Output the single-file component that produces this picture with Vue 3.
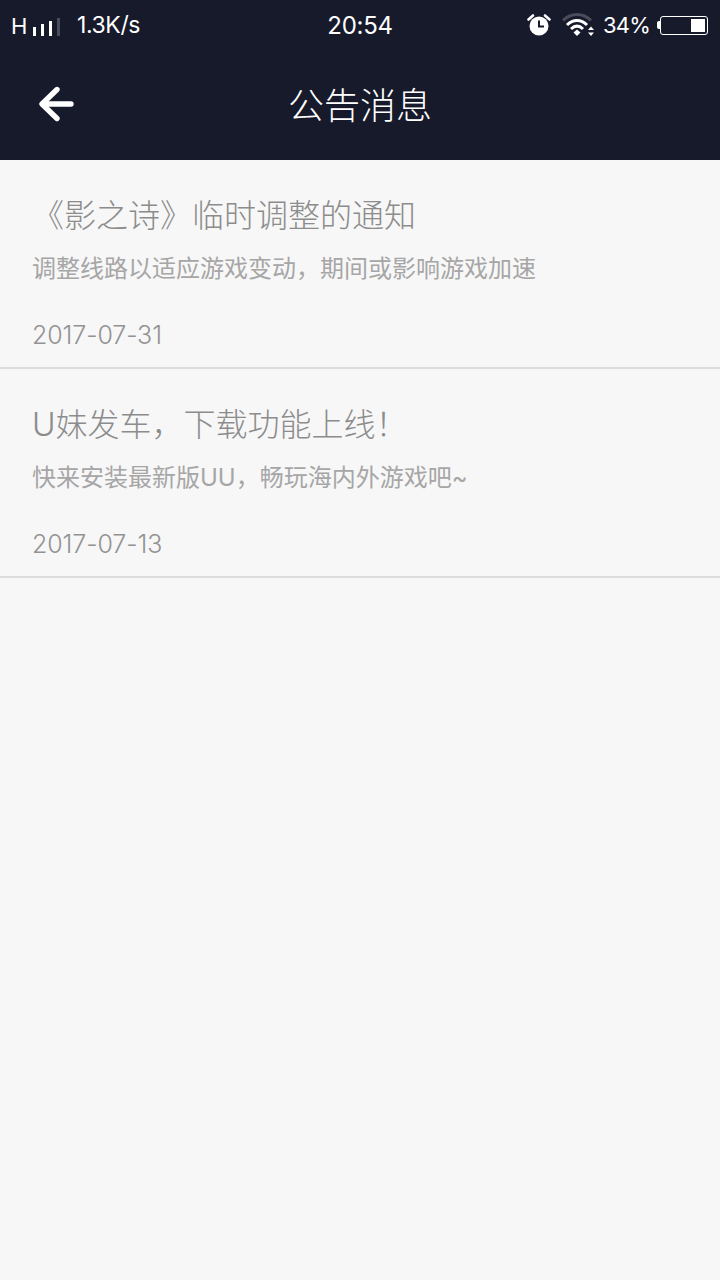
<script setup>
const notices = [
  {
    title: "《影之诗》临时调整的通知",
    desc: "调整线路以适应游戏变动，期间或影响游戏加速",
    date: "2017-07-31",
  },
  {
    title: "U妹发车，下载功能上线！",
    desc: "快来安装最新版UU，畅玩海内外游戏吧~",
    date: "2017-07-13",
  },
];
</script>

<template>
  <div class="page">
    <div class="statusbar">
      <div class="status-left">
        <span class="net">H</span>
        <div class="signal">
          <i class="b1"></i><i class="b2"></i><i class="b3"></i><i class="b4"></i>
        </div>
        <span class="speed">1.3K/s</span>
      </div>
      <div class="clock">20:54</div>
      <div class="status-right">
        <svg class="alarm" width="24" height="24" viewBox="0 0 24 24">
          <circle cx="12" cy="13" r="9.5" fill="#fff" />
          <path d="M12 7.5V13.5H17" fill="none" stroke="#171a2b" stroke-width="2" />
          <path d="M1.5 6.5L6 2.5M22.5 6.5L18 2.5" stroke="#fff" stroke-width="2.6" stroke-linecap="round" />
        </svg>
        <svg class="wifi" width="34" height="26" viewBox="0 0 34 26">
          <path d="M1 8.5C9 0.5 21 0.5 29 8.5" fill="none" stroke="#4a4c5a" stroke-width="3" />
          <path d="M5 13C11 7 19 7 25 13" fill="none" stroke="#fff" stroke-width="3" />
          <path d="M9 17C13 13.2 17 13.2 21 17" fill="none" stroke="#fff" stroke-width="3" />
          <path d="M11.5 20.5L15 17.5L18.5 20.5L15 24Z" fill="#fff" />
          <path d="M26 18L29 14.5L32 18ZM26 20.5H32L29 24Z" fill="#fff" />
        </svg>
        <span class="percent">34%</span>
        <div class="battery-tip"></div>
        <div class="battery"><div class="level"></div></div>
      </div>
    </div>
    <div class="navbar">
      <svg class="back" width="38" height="38" viewBox="0 0 38 38">
        <path d="M20 4.5L5 19L20 33.5M6 19H34" fill="none" stroke="#fff" stroke-width="5.4" stroke-linecap="round" stroke-linejoin="round" />
      </svg>
      <h1 class="title">公告消息</h1>
    </div>
    <div class="list">
      <div class="item" v-for="n in notices" :key="n.date">
        <div class="item-title">{{ n.title }}</div>
        <div class="item-desc">{{ n.desc }}</div>
        <div class="item-date">{{ n.date }}</div>
      </div>
    </div>
  </div>
</template>

<style scoped>
.page {
  width: 720px;
  height: 1280px;
  overflow: hidden;
  background-color: #f7f7f7;
  font-family: "Inter", "Noto Sans CJK SC", sans-serif;
}
.statusbar {
  height: 50px;
  background-color: #171a2b;
  color: #fff;
  display: grid;
  grid-template-columns: 1fr auto 1fr;
  align-items: center;
}
.status-left {
  display: flex;
  align-items: center;
  padding-left: 11px;
}
.net {
  font-size: 22px;
  font-weight: 400;
  width: 22px;
  margin-top: 2px;
}
.signal {
  display: flex;
  align-items: flex-end;
  gap: 5px;
  height: 20px;
  margin-top: 2px;
}
.signal i {
  display: block;
  width: 3px;
  background-color: #fff;
}
.signal .b1 { height: 9px; }
.signal .b2 { height: 12px; }
.signal .b3 { height: 15px; }
.signal .b4 { height: 18px; background-color: #4a4c5a; }
.speed {
  font-size: 23px;
  margin-left: 17px;
  letter-spacing: -0.4px;
}
.clock {
  font-size: 24px;
  letter-spacing: -0.3px;
  margin-top: 1px;
}
.status-right {
  display: flex;
  align-items: center;
  justify-content: flex-end;
  padding-right: 12px;
}
.alarm {
  margin-right: 11px;
}
.wifi {
  margin-right: 7px;
}
.percent {
  font-size: 22px;
  letter-spacing: -0.8px;
}
.battery-tip {
  width: 3px;
  height: 8px;
  margin-left: 7px;
  background-color: #fff;
  border-radius: 2px 0 0 2px;
}
.battery {
  width: 48px;
  height: 19px;
  box-sizing: border-box;
  border: 1px solid #fff;
  border-radius: 3px;
  padding: 2px;
  display: flex;
  justify-content: flex-end;
}
.level {
  width: 14px;
  background-color: #fff;
}
.navbar {
  height: 110px;
  background-color: #171a2b;
  display: flex;
  align-items: center;
  justify-content: center;
  position: relative;
}
.back {
  position: absolute;
  left: 37px;
  top: 35px;
}
.title {
  margin: 0 0 4px;
  color: #fff;
  font-size: 36px;
  font-weight: 300;
  letter-spacing: 0;
}
.item {
  box-sizing: border-box;
  height: 209px;
  padding: 34px 32px 0;
  border-bottom: 2px solid #dcdcdc;
}
.item-title {
  font-size: 32px;
  line-height: 44px;
  font-weight: 300;
  color: #8c8c8c;
}
.item-desc {
  margin-top: 14px;
  font-size: 24px;
  line-height: 34px;
  font-weight: 400;
  color: #a6a6a6;
}
.item-date {
  margin-top: 32px;
  font-size: 25px;
  line-height: 34px;
  font-weight: 300;
  letter-spacing: -0.1px;
  color: #939393;
}
</style>
